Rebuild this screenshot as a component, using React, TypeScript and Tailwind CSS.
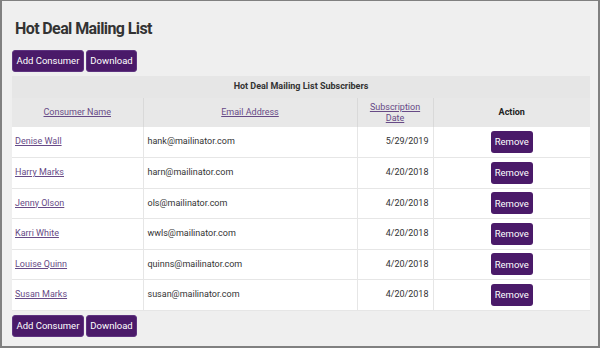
import React from "react";

const subscribers = [
  { name: "Denise Wall", email: "hank@mailinator.com", date: "5/29/2019" },
  { name: "Harry Marks", email: "harn@mailinator.com", date: "4/20/2018" },
  { name: "Jenny Olson", email: "ols@mailinator.com", date: "4/20/2018" },
  { name: "Karri White", email: "wwls@mailinator.com", date: "4/20/2018" },
  { name: "Louise Quinn", email: "quinns@mailinator.com", date: "4/20/2018" },
  { name: "Susan Marks", email: "susan@mailinator.com", date: "4/20/2018" },
];

function PurpleButton({ children }: { children: React.ReactNode }) {
  return (
    <button className="h-[22px] px-[3.5px] rounded-[3px] bg-[#4a1a69] border border-[#5e3380] text-white text-[9.5px] leading-none">
      {children}
    </button>
  );
}

function Actions() {
  return (
    <div className="flex gap-[2px]">
      <PurpleButton>Add Consumer</PurpleButton>
      <PurpleButton>Download</PurpleButton>
    </div>
  );
}

export default function App() {
  return (
    <div
      className="w-[600px] h-[348px] bg-[#efefef] border-t border-x-2 border-b-2 border-[#808080] px-[10px] text-[#333]"
      style={{ fontFamily: "Roboto, 'Liberation Sans', sans-serif" }}
    >
      {/* Title */}
      <h1 className="pt-[18px] pl-[3px] text-[16px] tracking-[-0.6px] leading-[20px] font-bold text-[#333] mb-[11px]">
        Hot Deal Mailing List
      </h1>

      <Actions />

      {/* Subscribers table */}
      <table className="mt-[4px] w-[578px] border-collapse table-fixed text-[9px]">
        <colgroup>
          <col className="w-[131px]" />
          <col className="w-[214px]" />
          <col className="w-[76px]" />
          <col className="w-[157px]" />
        </colgroup>
        <thead>
          <tr className="h-[22px] bg-[#e6e6e6]">
            <th colSpan={4} className="font-bold text-center text-[#333]">
              Hot Deal Mailing List Subscribers
            </th>
          </tr>
          <tr className="h-[29px] bg-[#e8e8e8]">
            <th className="font-normal border-r border-[#d9d9d9]">
              <a className="underline text-[#674a86]">Consumer Name</a>
            </th>
            <th className="font-normal border-r border-[#d9d9d9]">
              <a className="underline text-[#674a86]">Email Address</a>
            </th>
            <th className="font-normal leading-[11px] border-r border-[#d9d9d9]">
              <a className="underline text-[#674a86]">
                Subscription
                <br />
                Date
              </a>
            </th>
            <th className="font-bold text-[#222]">Action</th>
          </tr>
        </thead>
        <tbody className="bg-white">
          {subscribers.map((s) => (
            <tr key={s.name} className="h-[30.5px] border-b border-[#e6e6e6]">
              <td className="pl-[3px] border-r border-[#e6e6e6]">
                <a className="underline text-[#674a86]">{s.name}</a>
              </td>
              <td className="pl-[4px] border-r border-[#e6e6e6]">{s.email}</td>
              <td className="pr-[4px] text-right border-r border-[#e6e6e6]">{s.date}</td>
              <td className="text-center">
                <button className="h-[22px] px-[4px] rounded-[3px] bg-[#4a1a69] text-white text-[9.5px] leading-none">
                  Remove
                </button>
              </td>
            </tr>
          ))}
        </tbody>
      </table>

      <div className="mt-[4px]">
        <Actions />
      </div>
    </div>
  );
}
